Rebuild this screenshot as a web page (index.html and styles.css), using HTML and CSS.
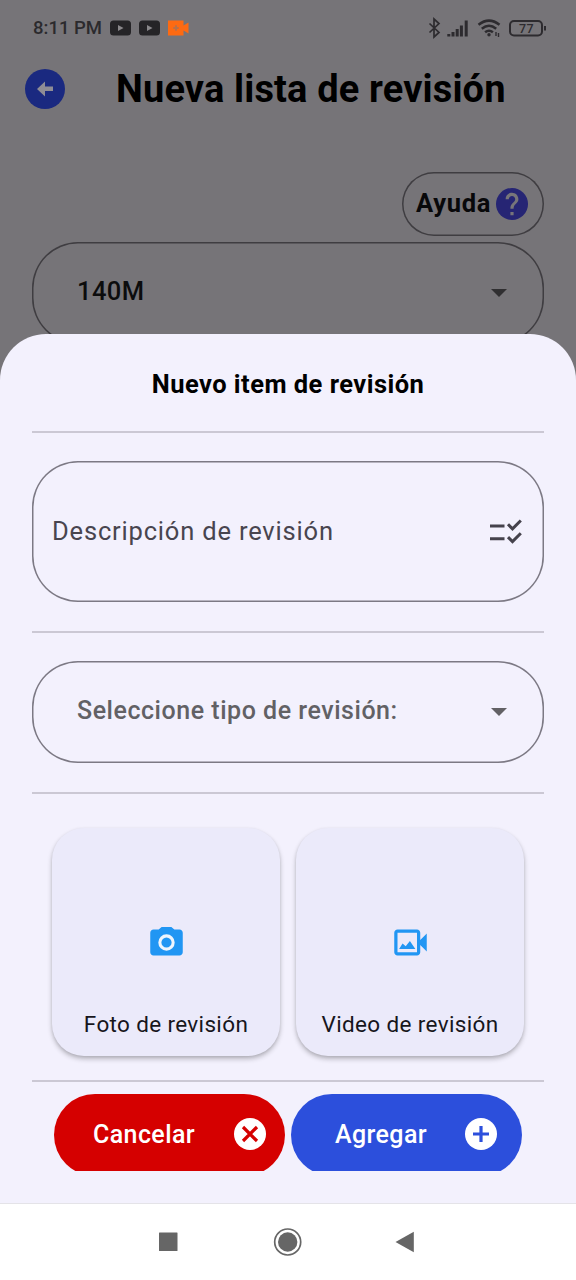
FILE: index.html
```html
<!DOCTYPE html>
<html lang="es">
<head>
<meta charset="utf-8">
<title>Nueva lista de revisión</title>
<link rel="stylesheet" href="styles.css">
</head>
<body>
<div class="screen">
  <div class="backdrop">
    <div class="status">
      <span class="clock">8:11 PM</span>
      <svg class="status-left" width="80" height="20" viewBox="0 0 80 20">
        <rect x="0" y="2.500" width="21" height="15" rx="3.500" fill="#252427"/>
        <path d="M8 7v6l5.500-3z" fill="#8a888b"/>
        <rect x="29" y="2.500" width="21" height="15" rx="3.500" fill="#252427"/>
        <path d="M37 7v6l5.500-3z" fill="#8a888b"/>
        <path d="M58 2.500h15.500v5l5-3v11l-5-3v5H58z" fill="#fd6a12"/>
        <path d="M66 7.300v5.400M63.300 10h5.400" stroke="#b97048" stroke-width="2"/>
      </svg>
      <svg class="status-right" width="120" height="24" viewBox="0 0 120 24" fill="none" stroke="#2d2b2f">
        <path d="M1.500 7.500l9.500 9-5 4.500V3l5 4.500-9.500 9" stroke-width="1.700"/>
        <path d="M20.800 20.500v-2.600M25 20.500v-4.500M29.200 20.500v-7.500M33.400 20.500V9.500M38.200 20.500V4.500" stroke-width="3"/>
        <path d="M50.500 8.800q10.500-8.300 21 0M53.800 12.700q7.200-5.800 14.400 0M57.100 16.300q3.900-3.200 7.800 0" stroke-width="2.500"/>
        <circle cx="61" cy="18.700" r="1.700" fill="#2d2b2f" stroke="none"/>
        <path d="M68 16v4M70.500 17v4" stroke-width="1.400"/>
        <rect x="82" y="5" width="32" height="14.500" rx="4" stroke-width="2"/>
        <path d="M117 10v4.500" stroke-width="2"/>
        <text x="98.500" y="16.500" text-anchor="middle" class="battery">77</text>
      </svg>
    </div>
    <div class="header">
      <svg width="40" height="40" viewBox="0 0 40 40">
        <circle cx="20" cy="20" r="20" fill="#1a2980"/>
        <path d="M12 20l8-7.500v5h8v4.500h-8v5.500z" fill="#8f8d95"/>
      </svg>
      <h1 class="page-title">Nueva lista de revisión</h1>
    </div>
    <div class="help">
      <span class="help-text">Ayuda</span>
      <svg width="32" height="32" viewBox="2 2 20 20">
        <circle cx="12" cy="12" r="10" fill="#262574"/>
        <path d="M11 17h2v2h-2zM15.070 11.250l-.9.920C13.450 12.900 13 13.500 13 15h-2v-.5c0-1.100.450-2.100 1.170-2.830l1.240-1.260c.370-.360.590-.860.590-1.410 0-1.100-.9-2-2-2s-2 .9-2 2H8c0-2.210 1.790-4 4-4s4 1.790 4 4c0 .880-.360 1.680-.930 2.250z" fill="#77757a"/>
      </svg>
    </div>
    <div class="select select-dim">
      <span class="machine">140M</span>
      <svg width="16" height="8" viewBox="0 0 16 8"><path d="M0 0h16l-8 8z" fill="#302f31"/></svg>
    </div>
  </div>

  <div class="sheet">
    <h2 class="sheet-title">Nuevo item de revisión</h2>
    <div class="divider"></div>
    <div class="field">
      <span class="description">Descripción de revisión</span>
      <svg width="34" height="26" viewBox="0 0 34 26" fill="none" stroke="#45424c" stroke-width="3">
        <path d="M1 8h14.500M1 20.800h14.500M19 6.300l4.500 4.500 8.300-8.300M19 19.100l4.500 4.500 8.300-8.300"/>
      </svg>
    </div>
    <div class="divider"></div>
    <div class="select">
      <span class="kind">Seleccione tipo de revisión:</span>
      <svg width="16" height="8" viewBox="0 0 16 8"><path d="M0 0h16l-8 8z" fill="#626165"/></svg>
    </div>
    <div class="divider"></div>
    <div class="cards">
      <div class="card">
        <svg width="39" height="39" viewBox="0 0 24 24" fill="#2196f3">
          <path d="M9 2.500 7.170 4H4c-1.100 0-2 .9-2 2v12c0 1.100.9 2 2 2h16c1.100 0 2-.9 2-2V6c0-1.100-.9-2-2-2h-3.170L15 2.500z"/>
          <circle cx="12" cy="12" r="4.100" stroke="#eef5fd" stroke-width="1.900"/>
        </svg>
        <span class="card-text photo-text">Foto de revisión</span>
      </div>
      <div class="card">
        <svg width="39" height="39" viewBox="0 0 24 24" fill="#2196f3">
          <path fill-rule="evenodd" d="M18 10.480V6c0-1.100-.9-2-2-2H4c-1.100 0-2 .9-2 2v12c0 1.100.9 2 2 2h12c1.100 0 2-.9 2-2v-4.480l4 3.980v-11zM16 18H4V6h12zM11.620 11l-2.570 3.330L7.120 12.600 5 16h10z"/>
        </svg>
        <span class="card-text video-text">Video de revisión</span>
      </div>
    </div>
    <div class="divider"></div>
    <div class="actions">
      <div class="button cancel">
        <span class="cancel-text">Cancelar</span>
        <svg width="32" height="32" viewBox="0 0 32 32"><circle cx="16" cy="16" r="16" fill="#fff"/><path d="M9 9l14 14M23 9L9 23" stroke="#d50000" stroke-width="3.200"/></svg>
      </div>
      <div class="button add">
        <span class="add-text">Agregar</span>
        <svg width="32" height="32" viewBox="0 0 32 32"><circle cx="16" cy="16" r="16" fill="#fff"/><path d="M8 16h16M16 8v16" stroke="#2c4fdc" stroke-width="3.200"/></svg>
      </div>
    </div>
  </div>

  <div class="nav">
    <svg width="260" height="32" viewBox="0 0 260 32" fill="#666">
      <rect x="1" y="6.500" width="18.500" height="18.500" rx="0.500"/>
      <circle cx="129.700" cy="16" r="9.700"/>
      <circle cx="129.700" cy="16" r="13" fill="none" stroke="#666" stroke-width="1.700"/>
      <path d="M237.500 16l18.300-10.300v20.600z"/>
    </svg>
  </div>
</div>
</body>
</html>
```
FILE: styles.css
```css
* { box-sizing: border-box; }
body { margin: 0; font-family: Roboto, "Liberation Sans", sans-serif; }
svg { display: block; flex: none; }
h1, h2 { margin: 0; }
span, h1, h2 { white-space: nowrap; }

.screen { width: 576px; height: 1280px; display: flex; flex-direction: column; overflow: hidden; background: #fff; }

.backdrop { height: 384px; flex: none; padding: 0 32px; background: #767478; overflow: hidden; }
.status { height: 56px; display: flex; align-items: center; }
.clock { width: 77px; margin-left: 1px; font-size: 18.500px; font-weight: 500; color: #2b2a2d; letter-spacing: 0; }
.status-left { margin: -1px 0 0; }
.status-right { margin-left: 238px; }
.status .status-left { transform: none; }
.status { gap: 0; }
.clock + .status-left { width: 80px; }
.battery { font: 500 12.500px Roboto, sans-serif; fill: #2d2b2f; stroke: none; letter-spacing: 0.500px; }
.clock { flex: none; }
.header { height: 65px; margin-left: -7px; display: flex; align-items: center; gap: 51px; }
.page-title { font-size: 38px; font-weight: 700; line-height: 44px; color: #000; letter-spacing: 0.150px; }
.help { width: 142px; height: 64px; margin: 51px 0 6px auto; padding: 0 16px 2px 14px; display: flex; align-items: center; justify-content: space-between; box-shadow: inset 0 0 0 1.500px #3f3d41; border-radius: 32px; }
.help-text { font-size: 25.500px; font-weight: 700; color: #08080a; letter-spacing: 0.700px; }
.help svg { margin-top: 2px; }

.select { height: 102px; padding: 0 37px 0 45px; display: flex; align-items: center; justify-content: space-between; box-shadow: inset 0 0 0 1.500px #7c7984; border-radius: 46px; font-weight: 500; }
.select span { margin-top: -4px; }
.select-dim { box-shadow: inset 0 0 0 1.500px #3f3d41; }
.machine { font-size: 25.500px; color: #0c0c0d; letter-spacing: 0.400px; }

.sheet { height: 869px; flex: none; margin-top: -50px; padding: 0 32px; background: #f3f1fd; border-radius: 46px 46px 0 0; position: relative; }
.sheet-title { height: 97px; line-height: 100px; text-align: center; font-size: 25.500px; font-weight: 700; letter-spacing: 0.470px; color: #000; }
.divider { height: 2px; background: #cbc8d4; }
.field { height: 141px; margin: 28px 0 29px; padding: 0 21px 2px 20px; display: flex; align-items: center; justify-content: space-between; box-shadow: inset 0 0 0 1.500px #7c7984; border-radius: 46px; }
.description { font-size: 25.500px; color: #48454f; letter-spacing: 0.820px; }
.sheet .select { margin: 28px 0 29px; height: 102px; }
.kind { font-size: 25px; color: #626165; letter-spacing: 0.530px; }
.cards { height: 286px; padding: 34px 20px 24px; display: flex; justify-content: space-between; }
.card { width: 228px; height: 228px; padding: 95px 0 0; display: flex; flex-direction: column; align-items: center; gap: 48px; background: #ebeafa; border-radius: 32px; box-shadow: 0 3px 5px rgba(0,0,0,.24), 0 1px 3px rgba(0,0,0,.08); }
.card-text { font-size: 22.500px; line-height: 28px; color: #17161c; letter-spacing: 0.350px; }
.actions { height: 89px; padding: 12px 22px 0; display: flex; justify-content: space-between; overflow: hidden; }
.button { width: 231px; height: 82px; padding-bottom: 1px; display: flex; align-items: center; border-radius: 41px; color: #fff; font-size: 25px; font-weight: 500; letter-spacing: 0.400px; justify-content: space-between; }
.cancel { padding: 0 19px 2px 39px; background: #d50000; }
.add { padding: 0 25px 2px 44px; background: #2c4fdc; }

.nav { height: 77px; display: flex; align-items: center; justify-content: center; border-top: 1px solid #e4e3e8; background: #fff; }
```
